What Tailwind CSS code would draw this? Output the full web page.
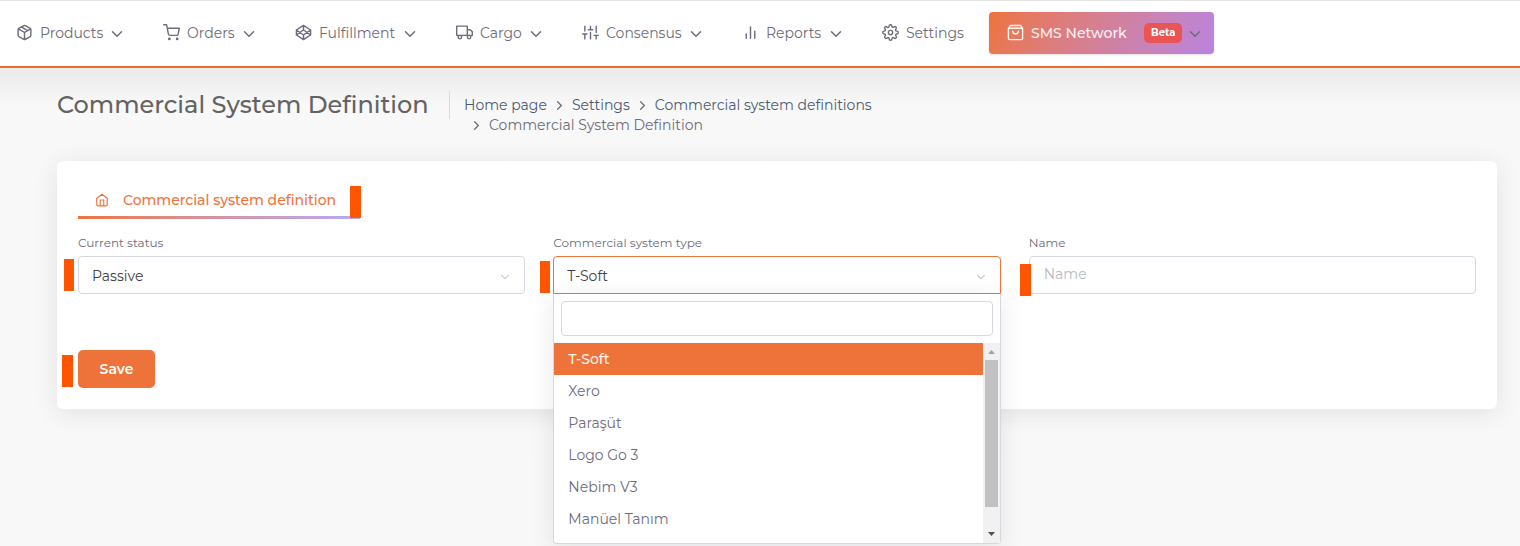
<!DOCTYPE html>
<html lang="en">
<head>
<meta charset="utf-8">
<meta name="viewport" content="width=device-width, initial-scale=1">
<title>Commercial System Definition</title>
<script src="https://cdn.jsdelivr.net/npm/@tailwindcss/browser@4"></script>
</head>
<body class="min-h-screen bg-[#f8f8f8] font-[Montserrat,Inter,sans-serif] text-[14px] leading-5 text-[#6e6b7b]">
<svg class="hidden" aria-hidden="true">
  <symbol id="down" viewBox="0 0 24 24"><path d="m6 9 6 6 6-6"/></symbol>
  <symbol id="right" viewBox="0 0 24 24"><path d="m9 18 6-6-6-6"/></symbol>
</svg>

<header class="relative border-t border-b-2 border-t-[#e4e4e4] border-b-[#ea6c2d] bg-white">
  <nav class="flex h-[65px] items-center gap-[37px] pb-[2px] pl-4" aria-label="Main">
    <button class="flex items-center whitespace-nowrap">
      <svg class="mr-[7px] size-[17px] fill-none stroke-current stroke-2" stroke-linecap="round" stroke-linejoin="round" viewBox="0 0 24 24"><path d="m16.5 9.400-9-5.190M21 16V8a2 2 0 0 0-1-1.730l-7-4a2 2 0 0 0-2 0l-7 4A2 2 0 0 0 3 8v8a2 2 0 0 0 1 1.730l7 4a2 2 0 0 0 2 0l7-4A2 2 0 0 0 21 16zM3.270 6.960 12 12.010l8.730-5.050M12 22.080V12"/></svg>
      <span class="min-w-16 text-left">Products</span>
      <svg class="mt-[2px] ml-1 size-[18px] fill-none stroke-current stroke-2" stroke-linecap="round" stroke-linejoin="round"><use href="#down"/></svg>
    </button>
    <button class="flex items-center whitespace-nowrap">
      <svg class="mr-[7px] size-[17px] fill-none stroke-current stroke-2" stroke-linecap="round" stroke-linejoin="round" viewBox="0 0 24 24"><circle cx="9" cy="21" r="1"/><circle cx="20" cy="21" r="1"/><path d="M1 1h4l2.680 13.390a2 2 0 0 0 2 1.610h9.720a2 2 0 0 0 2-1.610L23 6H6"/></svg>
      <span class="min-w-[49px] text-left">Orders</span>
      <svg class="mt-[2px] ml-1 size-[18px] fill-none stroke-current stroke-2" stroke-linecap="round" stroke-linejoin="round"><use href="#down"/></svg>
    </button>
    <button class="flex items-center whitespace-nowrap">
      <svg class="mr-[7px] size-[17px] fill-none stroke-current stroke-2" stroke-linecap="round" stroke-linejoin="round" viewBox="0 0 24 24"><path d="m12 2 10 6.500v7L12 22 2 15.500v-7L12 2zM12 22v-6.500M22 8.500l-10 7-10-7M2 15.500l10-7 10 7M12 2v6.500"/></svg>
      <span class="min-w-[78px] text-left">Fulfillment</span>
      <svg class="mt-[2px] ml-1 size-[18px] fill-none stroke-current stroke-2" stroke-linecap="round" stroke-linejoin="round"><use href="#down"/></svg>
    </button>
    <button class="flex items-center whitespace-nowrap">
      <svg class="mr-[7px] size-[17px] fill-none stroke-current stroke-2" stroke-linecap="round" stroke-linejoin="round" viewBox="0 0 24 24"><path d="M1 3h15v13H1zM16 8h4l3 3v5h-7z"/><circle cx="5.500" cy="18.500" r="2.500"/><circle cx="18.500" cy="18.500" r="2.500"/></svg>
      <span class="min-w-[43px] text-left">Cargo</span>
      <svg class="mt-[2px] ml-1 size-[18px] fill-none stroke-current stroke-2" stroke-linecap="round" stroke-linejoin="round"><use href="#down"/></svg>
    </button>
    <button class="flex items-center whitespace-nowrap">
      <svg class="mr-[7px] size-[17px] fill-none stroke-current stroke-2" stroke-linecap="round" stroke-linejoin="round" viewBox="0 0 24 24"><path d="M4 21v-7M4 10V3M12 21v-9M12 8V3M20 21v-5M20 12V3M1 14h6M9 8h6M17 16h6"/></svg>
      <span class="min-w-[77px] text-left">Consensus</span>
      <svg class="mt-[2px] ml-1 size-[18px] fill-none stroke-current stroke-2" stroke-linecap="round" stroke-linejoin="round"><use href="#down"/></svg>
    </button>
    <button class="flex items-center whitespace-nowrap">
      <svg class="mr-[7px] size-[17px] fill-none stroke-current stroke-2" stroke-linecap="round" stroke-linejoin="round" viewBox="0 0 24 24"><path d="M18 20V10M12 20V4M6 20v-6"/></svg>
      <span class="min-w-[57px] text-left">Reports</span>
      <svg class="mt-[2px] ml-1 size-[18px] fill-none stroke-current stroke-2" stroke-linecap="round" stroke-linejoin="round"><use href="#down"/></svg>
    </button>
    <div class="flex items-center gap-6">
      <a href="#settings" class="flex items-center gap-[7px] whitespace-nowrap">
        <svg class="size-[17px] fill-none stroke-current stroke-2" stroke-linecap="round" stroke-linejoin="round" viewBox="0 0 24 24"><circle cx="12" cy="12" r="3"/><path d="M19.400 15a1.650 1.650 0 0 0 .33 1.820l.06.06a2 2 0 0 1-2.830 2.830l-.06-.06a1.650 1.650 0 0 0-2.800 1.170V21a2 2 0 0 1-4 0v-.09A1.650 1.650 0 0 0 7.200 19.700l-.06.06a2 2 0 0 1-2.830-2.830l.06-.06A1.650 1.650 0 0 0 3.090 14H3a2 2 0 0 1 0-4h.09A1.650 1.650 0 0 0 4.300 7.200l-.06-.06a2 2 0 0 1 2.830-2.830l.06.06A1.650 1.650 0 0 0 10 3.090V3a2 2 0 0 1 4 0v.09a1.650 1.650 0 0 0 2.800 1.210l.06-.06a2 2 0 0 1 2.830 2.830l-.06.06A1.650 1.650 0 0 0 20.910 10H21a2 2 0 0 1 0 4h-.09a1.650 1.650 0 0 0-1.510 1z"/></svg>
        <span class="min-w-[59px]">Settings</span>
      </a>
      <button class="flex h-[42px] items-center rounded bg-linear-118 from-[#ee733a] to-[#b983e0] pr-[10px] pl-[18px] font-medium whitespace-nowrap text-white/90 shadow-sm">
        <svg class="mr-[7px] size-[17px] fill-none stroke-current stroke-2" stroke-linecap="round" stroke-linejoin="round" viewBox="0 0 24 24"><path d="M5 2h14l3 4v14a2 2 0 0 1-2 2H4a2 2 0 0 1-2-2V6zM2 6h20M16 10a4 4 0 0 1-8 0"/></svg>
        <span class="min-w-[99px] text-left">SMS Network</span>
        <span class="ml-[14px] rounded-[5px] bg-[#ea5455] px-[7px] text-[10px] font-bold text-white">Beta</span>
        <svg class="mt-[2px] ml-1 size-[18px] fill-none stroke-[#6e6b7b] stroke-2" stroke-linecap="round" stroke-linejoin="round"><use href="#down"/></svg>
      </button>
    </div>
  </nav>
</header>

<main class="bg-linear-to-b from-[#e9eae9] to-[#f8f8f8] to-[36px] pt-[23px] pr-[23px] pb-12 pl-[57px]">
  <div class="flex items-start gap-[15px]">
    <h1 class="min-w-[377px] text-[24px] leading-7 font-medium whitespace-nowrap text-[#636363]">Commercial System Definition</h1>
    <nav aria-label="Breadcrumb" class="h-7 border-l border-[#d6dce1]">
      <ol class="ml-[14px] flex w-[440px] flex-wrap pt-1 text-[#4c5a74]">
        <li><a href="#home">Home page</a></li>
        <li class="flex items-center"><svg class="mx-[5px] size-[15px] fill-none stroke-[#6e6b7b] stroke-2" stroke-linecap="round" stroke-linejoin="round"><use href="#right"/></svg><a href="#settings">Settings</a></li>
        <li class="flex items-center"><svg class="mx-[5px] size-[15px] fill-none stroke-[#6e6b7b] stroke-2" stroke-linecap="round" stroke-linejoin="round"><use href="#right"/></svg><a href="#definitions">Commercial system definitions</a></li>
        <li class="flex items-center text-[#6e6b7b]" aria-current="page"><svg class="mx-[5px] size-[15px] fill-none stroke-current stroke-2" stroke-linecap="round" stroke-linejoin="round"><use href="#right"/></svg>Commercial System Definition</li>
      </ol>
    </nav>
  </div>

  <form class="mt-[42px] rounded-md bg-white p-[21px] pt-[22px] shadow-[0_4px_24px_rgba(34,41,47,0.1)]">
    <div class="relative w-fit">
      <button type="button" class="flex h-[33px] min-w-[282px] items-center gap-[14px] pr-[17px] pl-[17px] font-medium text-[#ee733a]">
        <svg class="size-[14px] fill-none stroke-current stroke-2" stroke-linecap="round" stroke-linejoin="round" viewBox="0 0 24 24"><path d="m3 9 9-7 9 7v11a2 2 0 0 1-2 2H5a2 2 0 0 1-2-2zM9 22V12h6v10"/></svg>
        Commercial system definition
      </button>
      <div class="h-[3px] bg-linear-to-r from-[#ee733a] to-[#b6a8f8]"></div>
      <span class="absolute -right-px bottom-px h-8 w-[11px] bg-[#ff5500]"></span>
    </div>

    <div class="mt-[14px] grid grid-cols-3 gap-7">
      <div>
        <label for="status" class="block text-[12px] leading-5">Current status</label>
        <div class="relative mt-[3px]">
          <select id="status" class="block h-[38px] w-full appearance-none rounded border border-[#d8d6de] bg-white px-[13px] pt-[2px] text-[#404040]"><option>Passive</option></select>
          <svg class="pointer-events-none absolute top-[14px] right-[13px] size-[14px] fill-none stroke-[#d0d0d4] stroke-2" stroke-linecap="round" stroke-linejoin="round"><use href="#down"/></svg>
          <span class="absolute top-[3px] -left-[14px] h-8 w-[10px] bg-[#ff5500]"></span>
        </div>
      </div>
      <div>
        <label for="type" class="block text-[12px] leading-5">Commercial system type</label>
        <div class="relative mt-[3px]">
          <select id="type" class="block h-[38px] w-full appearance-none rounded-t border border-[#ee733a] bg-white px-[13px] pt-[2px] text-[#404040]"><option>T-Soft</option></select>
          <svg class="pointer-events-none absolute top-[14px] right-[13px] size-[14px] fill-none stroke-[#d0d0d4] stroke-2" stroke-linecap="round" stroke-linejoin="round"><use href="#down"/></svg>
          <span class="absolute top-[5px] -left-[13px] h-8 w-[10px] bg-[#ff5500]"></span>
          <div class="absolute inset-x-0 top-full z-10 rounded-b border border-t-0 border-[#d8d6de] bg-white shadow-[0_5px_25px_rgba(34,41,47,0.1)]">
            <div class="p-[7px]"><input type="search" aria-label="Search system types" class="block h-[35px] w-full rounded border border-[#d8d6de] px-2 outline-none"></div>
            <div class="flex h-[200px]">
              <ul role="listbox" aria-label="Commercial system type" class="h-full flex-1 overflow-hidden">
                <li role="option" aria-selected="true" class="bg-[#ee733a] px-[14px] py-[6px] font-medium text-white/90">T-Soft</li>
                <li role="option" class="px-[14px] py-[6px]">Xero</li>
                <li role="option" class="px-[14px] py-[6px]">Paraşüt</li>
                <li role="option" class="px-[14px] py-[6px]">Logo Go 3</li>
                <li role="option" class="px-[14px] py-[6px]">Nebim V3</li>
                <li role="option" class="px-[14px] py-[6px]">Manüel Tanım</li>
              </ul>
              <div class="flex w-[17px] flex-col items-center justify-between bg-[#f1f1f1]" aria-hidden="true">
                <svg class="h-[17px] w-[17px] fill-[#a3a3a3]" viewBox="0 0 17 17"><path d="M5 11h7L8.500 7z"/></svg>
                <div class="mb-auto h-[147px] w-[13px] bg-[#c1c1c1]"></div>
                <svg class="h-[17px] w-[17px] fill-[#505050]" viewBox="0 0 17 17"><path d="M5 6h7l-3.500 4z"/></svg>
              </div>
            </div>
          </div>
        </div>
      </div>
      <div>
        <label for="name" class="block text-[12px] leading-5">Name</label>
        <div class="relative mt-[3px]">
          <input id="name" type="text" placeholder="Name" class="block h-[38px] w-full rounded border border-[#d8d6de] bg-white px-[14px] pb-[2px] placeholder:text-[#b9b9c3]">
          <span class="absolute top-2 -left-[9px] h-8 w-[11px] bg-[#ff5500]"></span>
        </div>
      </div>
    </div>

    <div class="relative mt-14 w-fit">
      <button type="submit" class="h-[38px] min-w-[77px] rounded-[5px] bg-[#ee733a] px-5 font-semibold text-white">Save</button>
      <span class="absolute top-[5px] -left-4 h-8 w-[11px] bg-[#ff5500]"></span>
    </div>
  </form>
</main>
</body>
</html>
